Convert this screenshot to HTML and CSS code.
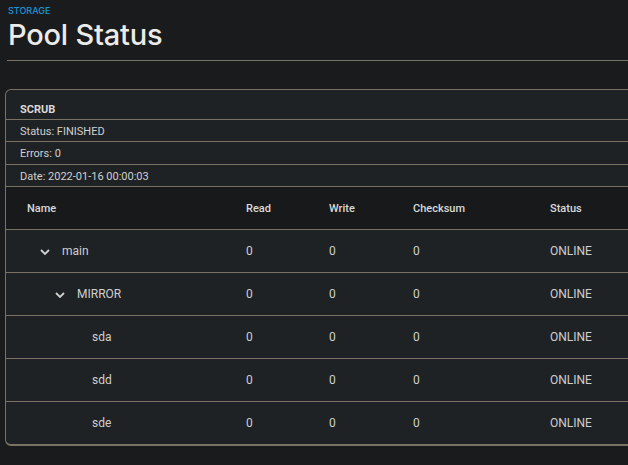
FILE: index.html
```html
<!DOCTYPE html>
<html>
<head>
<meta charset="utf-8">
<link rel="stylesheet" href="styles.css">
</head>
<body>
<div class="page">
  <header class="head">
    <div class="crumb">STORAGE</div>
    <h1 class="title">Pool Status</h1>
  </header>
  <section class="card">
    <div class="card-title">SCRUB</div>
    <div class="info">Status: FINISHED</div>
    <div class="info">Errors: 0</div>
    <div class="info">Date: 2022-01-16 00:00:03</div>
    <table class="grid">
      <thead>
        <tr><th class="c-name">Name</th><th class="c-read">Read</th><th class="c-write">Write</th><th class="c-sum">Checksum</th><th>Status</th></tr>
      </thead>
      <tbody>
        <tr><td><span class="lvl1"><svg class="chev" viewBox="0 0 10 6" width="10" height="6"><path d="M1 1 L5 5 L9 1" fill="none" stroke="currentColor" stroke-width="1.8"/></svg>main</span></td><td>0</td><td>0</td><td>0</td><td>ONLINE</td></tr>
        <tr><td><span class="lvl2"><svg class="chev" viewBox="0 0 10 6" width="10" height="6"><path d="M1 1 L5 5 L9 1" fill="none" stroke="currentColor" stroke-width="1.8"/></svg>MIRROR</span></td><td>0</td><td>0</td><td>0</td><td>ONLINE</td></tr>
        <tr><td><span class="lvl3">sda</span></td><td>0</td><td>0</td><td>0</td><td>ONLINE</td></tr>
        <tr><td><span class="lvl3">sdd</span></td><td>0</td><td>0</td><td>0</td><td>ONLINE</td></tr>
        <tr><td><span class="lvl3">sde</span></td><td>0</td><td>0</td><td>0</td><td>ONLINE</td></tr>
      </tbody>
    </table>
  </section>
</div>
</body>
</html>
```
FILE: styles.css
```css
html, body {
  margin: 0;
  padding: 0;
  background: #1a1b1d;
  overflow: hidden;
}
body {
  font-family: Roboto, "Liberation Sans", sans-serif;
  color: #d4d4d4;
}
.page {
  width: 680px;
  padding: 0 0 0 5px;
}
.head {
  margin-left: 2px;
  border-bottom: 1px solid #7a7265;
  padding: 5px 0 0 1px;
  height: 61px;
  box-sizing: border-box;
}
.crumb {
  font-family: Inter, sans-serif;
  font-size: 9px;
  font-weight: 500;
  color: #1b95d8;
  line-height: 11px;
}
.title {
  margin: 0;
  font-family: Inter, sans-serif;
  font-weight: 500;
  font-size: 29px;
  letter-spacing: -0.2px;
  line-height: 38px;
  color: #ecebe8;
}
.card {
  margin-top: 28px;
  background: #1f2224;
  border: 1px solid #7a7265;
  border-radius: 6px;
  border-bottom-width: 2px;
  overflow: hidden;
}
.card-title {
  font-size: 11px;
  font-weight: 700;
  color: #d9d9d9;
  padding: 13px 14px 0;
  height: 16px;
  border-bottom: 1px solid #7a7265;
}
.info {
  font-size: 11px;
  color: #d0d0d0;
  padding: 1px 14px 0;
  height: 20.4px;
  line-height: 21px;
  border-bottom: 1px solid #7a7265;
}
.grid {
  width: 100%;
  border-collapse: collapse;
  font-size: 11px;
}
.grid th {
  background: #18191b;
  text-align: left;
  font-weight: 500;
  color: #d9d9d9;
  height: 42px;
  padding: 0;
  border-bottom: 1px solid #7a7265;
}
.grid td {
  height: 42px;
  padding: 0;
  font-size: 12px;
  color: #cfcfcf;
  border-bottom: 1px solid #7a7265;
}
.grid tbody tr:last-child td {
  border-bottom: none;
}
.grid th:first-child, .grid td:first-child {
  padding-left: 21px;
}
.c-name { width: 219px; }
.c-read { width: 83px; }
.c-write { width: 84px; }
.c-sum { width: 137px; }
.grid td:nth-child(1) { width: 219px; }
.lvl1, .lvl2, .lvl3 {
  display: inline-flex;
  align-items: center;
}
.lvl1 { padding-left: 13px; }
.lvl2 { padding-left: 28px; }
.lvl3 { padding-left: 65px; }
.chev {
  margin-right: 12px;
  margin-top: 2px;
  color: #d0d0d0;
}
```
